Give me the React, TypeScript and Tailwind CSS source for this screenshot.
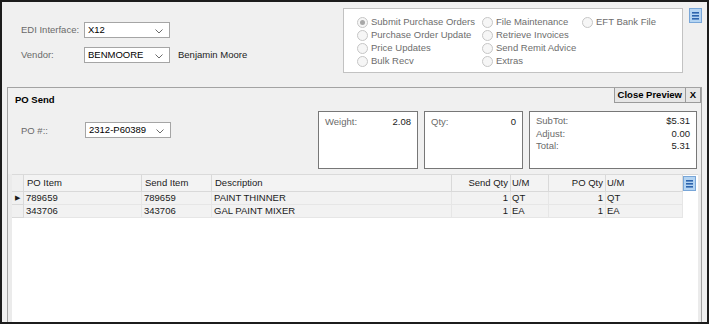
import React from "react";

function Chevron() {
  return (
    <svg width="8" height="5" viewBox="0 0 8 5" className="absolute right-[6px] top-[6px]">
      <polyline points="0.5,0.5 4,4 7.5,0.5" fill="none" stroke="#6b6b6b" strokeWidth="1" />
    </svg>
  );
}

function Combo({ value, className }: { value: string; className: string }) {
  return (
    <div className={`relative h-[16px] border border-[#a5a5a5] bg-white pl-[3px] leading-[13px] text-black ${className}`}>
      {value}
      <Chevron />
    </div>
  );
}

function MenuIcon() {
  return (
    <svg width="13" height="15" viewBox="0 0 13 15">
      <rect x="0.5" y="0.5" width="12" height="14" fill="#b4d4f2" stroke="#78a6d8" />
      <rect x="3" y="4" width="7" height="1.6" fill="#2d64ad" />
      <rect x="3" y="7" width="7" height="1.6" fill="#2d64ad" />
      <rect x="3" y="10" width="7" height="1.6" fill="#2d64ad" />
    </svg>
  );
}

function Radio({ label, checked }: { label: string; checked?: boolean }) {
  return (
    <div className="flex h-[13px] items-center gap-[3px]">
      <span className="flex h-[11px] w-[11px] items-center justify-center rounded-full border border-[#c6c6c6] bg-[#f6f6f6]">
        {checked && <span className="h-[5px] w-[5px] rounded-full bg-[#a8a8a8]" />}
      </span>
      <span>{label}</span>
    </div>
  );
}

const rows = [
  { po: "789659", send: "789659", desc: "PAINT THINNER", sq: "1", um: "QT", pq: "1", um2: "QT", sel: true },
  { po: "343706", send: "343706", desc: "GAL PAINT MIXER", sq: "1", um: "EA", pq: "1", um2: "EA", sel: false },
];

export default function App() {
  return (
    <div className="flex h-[324px] w-[709px] flex-col overflow-hidden border-2 border-[#1c1c1c] bg-[#f0f0f0] font-['Liberation_Sans',Arial,sans-serif] text-[9.5px] text-[#1a1a1a]">
      {/* top area */}
      <div className="flex h-[85px] shrink-0">
        <div className="flex w-[341px] flex-col gap-[9px] pl-[19px] pt-[20px]">
          <div className="flex items-center">
            <span className="w-[63px] text-[#6a6a6a]">EDI Interface:</span>
            <Combo value="X12" className="w-[86px]" />
          </div>
          <div className="flex items-center">
            <span className="w-[63px] text-[#6a6a6a]">Vendor:</span>
            <Combo value="BENMOORE" className="w-[86px]" />
            <span className="ml-[8px] text-[#222]">Benjamin Moore</span>
          </div>
        </div>
        <div className="mt-[6px] grid h-[65px] w-[340px] grid-cols-[125px_100px_1fr] content-start border border-[#c2c2c2] bg-white pl-[13px] pt-[7px] text-[#6d6d6d]">
          <div className="flex flex-col">
            <Radio label="Submit Purchase Orders" checked />
            <Radio label="Purchase Order Update" />
            <Radio label="Price Updates" />
            <Radio label="Bulk Recv" />
          </div>
          <div className="flex flex-col">
            <Radio label="File Maintenance" />
            <Radio label="Retrieve Invoices" />
            <Radio label="Send Remit Advice" />
            <Radio label="Extras" />
          </div>
          <div className="flex flex-col">
            <Radio label="EFT Bank File" />
          </div>
        </div>
        <div className="ml-[6px] mt-[6px]">
          <MenuIcon />
        </div>
      </div>

      {/* PO Send panel */}
      <div className="ml-[5px] flex w-[695px] flex-1 flex-col border-x border-t border-[#a3a3a3]">
        <div className="flex h-[15px] items-start">
          <span className="pl-[7px] pt-[5px] font-bold text-black">PO Send</span>
          <div className="ml-auto flex h-[15px] border border-t-0 border-[#9a9a9a] bg-[#e6e6e6] font-bold text-black">
            <span className="flex items-center border-r border-[#9a9a9a] px-[3px]">Close Preview</span>
            <span className="flex w-[14px] items-center justify-center">X</span>
          </div>
        </div>

        <div className="mt-[8px] flex h-[58px]">
          <div className="flex w-[310px] items-start pl-[13px] pt-[11px]">
            <span className="w-[64px] pt-[2px] text-[#6a6a6a]">PO #::</span>
            <Combo value="2312-P60389" className="w-[86px]" />
          </div>
          <div className="flex w-[100px] justify-between border border-[#777] bg-white px-[6px] pt-[3px]">
            <span className="text-[#6a6a6a]">Weight:</span>
            <span>2.08</span>
          </div>
          <div className="ml-[6px] flex w-[99px] justify-between border border-[#777] bg-white px-[6px] pt-[3px]">
            <span className="text-[#6a6a6a]">Qty:</span>
            <span>0</span>
          </div>
          <div className="ml-[6px] flex w-[168px] flex-col border border-[#777] bg-white px-[6px] pt-[3px] leading-[12.5px]">
            <div className="flex justify-between">
              <span className="text-[#6a6a6a]">SubTot:</span>
              <span>$5.31</span>
            </div>
            <div className="flex justify-between">
              <span className="text-[#6a6a6a]">Adjust:</span>
              <span>0.00</span>
            </div>
            <div className="flex justify-between">
              <span className="text-[#6a6a6a]">Total:</span>
              <span>5.31</span>
            </div>
          </div>
        </div>

        {/* grid */}
        <div className="mt-[5px] flex flex-1 bg-[#ebebeb] pl-[4px] pr-[3px]">
          <div className="relative flex-1 border-t border-[#dadada] bg-white">
            <div className="grid grid-cols-[12px_118px_70px_240px_59px_38px_57px_77px]">
              <div className="h-[17px] border-r border-b border-[#d9d9d9] bg-[#f0f0f0]" />
              <div className="flex h-[17px] items-center border-r border-b border-[#d9d9d9] bg-[#f3f3f3] pl-[3px]">PO Item</div>
              <div className="flex h-[17px] items-center border-r border-b border-[#d9d9d9] bg-[#f3f3f3] pl-[3px]">Send Item</div>
              <div className="flex h-[17px] items-center border-r border-b border-[#d9d9d9] bg-[#f3f3f3] pl-[3px]">Description</div>
              <div className="flex h-[17px] items-center justify-end border-r border-b border-[#d9d9d9] bg-[#f3f3f3] pr-[2px]">Send Qty</div>
              <div className="flex h-[17px] items-center border-r border-b border-[#d9d9d9] bg-[#f3f3f3] pl-[1px]">U/M</div>
              <div className="flex h-[17px] items-center justify-end border-r border-b border-[#d9d9d9] bg-[#f3f3f3] pr-[2px]">PO Qty</div>
              <div className="flex h-[17px] items-center border-r border-b border-[#d9d9d9] bg-[#f3f3f3] pl-[1px]">U/M</div>
              {rows.map((r) => (
                <React.Fragment key={r.po}>
                  <div className="flex h-[13px] items-center justify-center border-r border-b border-[#d9d9d9] bg-[#f0f0f0] text-[7px]">
                    {r.sel ? "▶" : ""}
                  </div>
                  <div className="flex h-[13px] items-center border-r border-b border-[#e6e6e6] bg-[#f2f2f2] pl-[2px]">{r.po}</div>
                  <div className="flex h-[13px] items-center border-r border-b border-[#e6e6e6] bg-[#f2f2f2] pl-[2px]">{r.send}</div>
                  <div className="flex h-[13px] items-center border-r border-b border-[#e6e6e6] bg-[#f2f2f2] pl-[2px]">{r.desc}</div>
                  <div className="flex h-[13px] items-center justify-end border-r border-b border-[#e6e6e6] bg-[#f2f2f2] pr-[2px]">{r.sq}</div>
                  <div className="flex h-[13px] items-center border-r border-b border-[#e6e6e6] bg-[#f2f2f2] pl-[1px]">{r.um}</div>
                  <div className="flex h-[13px] items-center justify-end border-r border-b border-[#e6e6e6] bg-[#f2f2f2] pr-[2px]">{r.pq}</div>
                  <div className="flex h-[13px] items-center border-r border-b border-[#e6e6e6] bg-[#f2f2f2] pl-[1px]">{r.um2}</div>
                </React.Fragment>
              ))}
            </div>
            <div className="absolute left-[671px] top-[1px]">
              <MenuIcon />
            </div>
          </div>
        </div>
      </div>
    </div>
  );
}
